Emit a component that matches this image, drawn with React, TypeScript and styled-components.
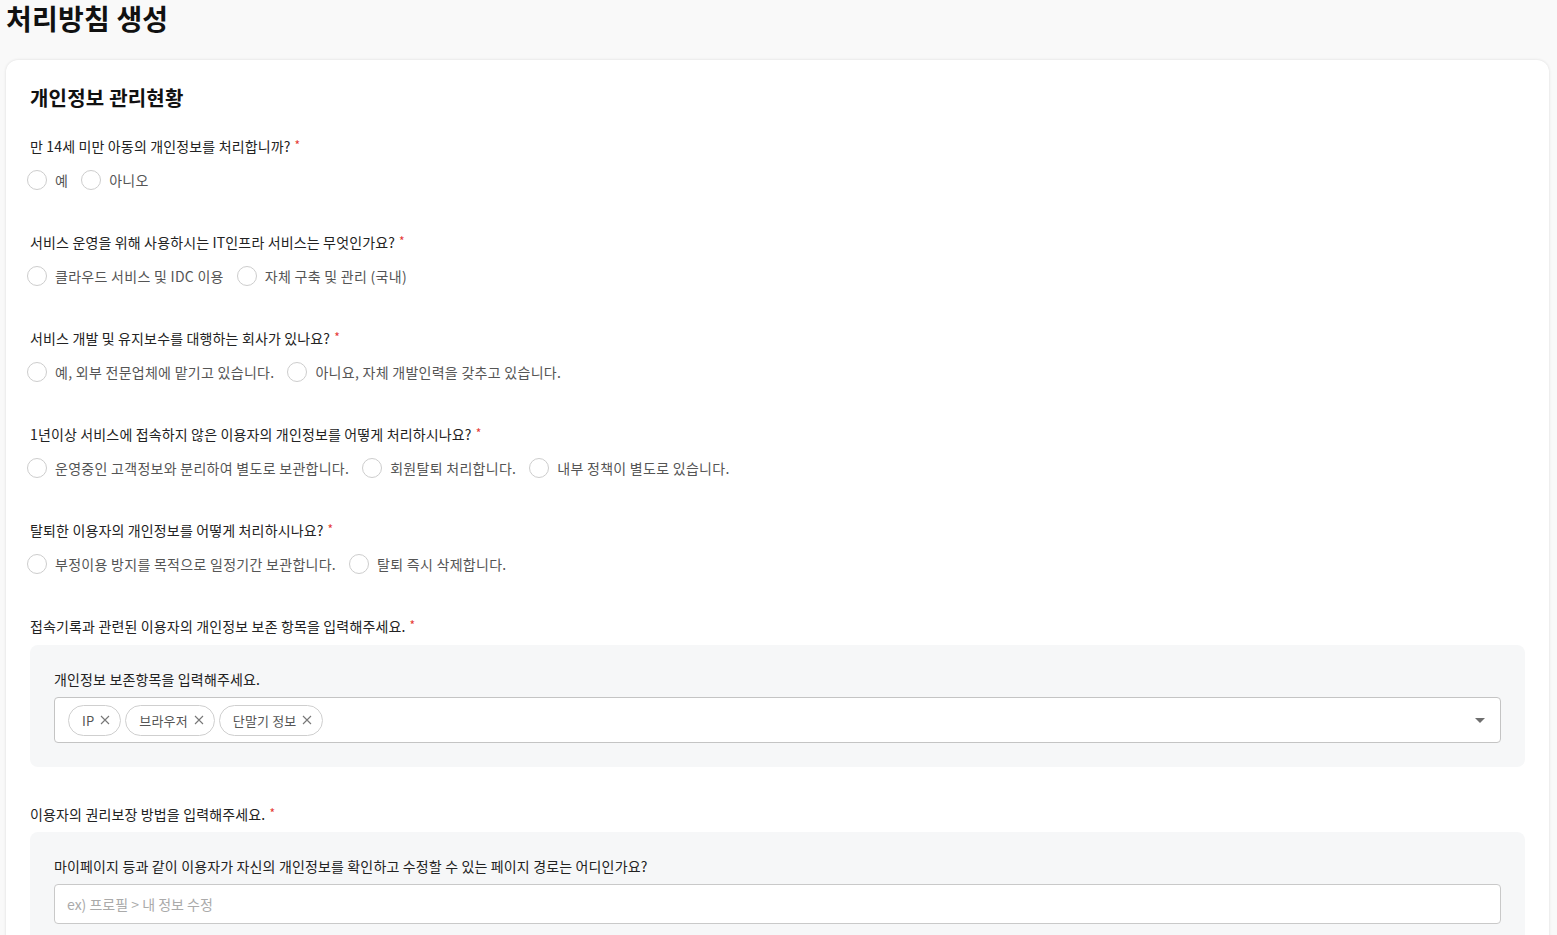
import React from "react";
import styled, { createGlobalStyle } from "styled-components";

const Global = createGlobalStyle`
  html, body { margin: 0; padding: 0; background: #f9f9f9; }
  body { font-family: "Noto Sans CJK KR", "Noto Sans", sans-serif; color: #222; }
  * { box-sizing: border-box; }
`;

const Page = styled.div`
  padding: 0 8px 0 6px;
`;

const PageTitle = styled.h1`
  margin: 0;
  font-size: 28px;
  line-height: 36px;
  font-weight: 700;
  color: #111;
  letter-spacing: 0.2px;
`;

const Card = styled.section`
  margin-top: 24px;
  background: #fff;
  border-radius: 12px;
  box-shadow: 0 0 3px rgba(0, 0, 0, 0.12);
  padding: 24px 24px 40px;
`;

const SectionTitle = styled.h2`
  margin: 0;
  font-size: 20px;
  line-height: 28px;
  font-weight: 700;
  color: #111;
  letter-spacing: 0.2px;
`;

const Question = styled.div<{ $top: number }>`
  margin-top: ${(p) => p.$top}px;
  display: flex;
  flex-direction: column;
`;

const Label = styled.div`
  font-size: 14px;
  line-height: 20px;
  height: 20px;
  color: #222;
  letter-spacing: 0.15px;
  white-space: nowrap;
`;

const Star = styled.span`
  color: #e53935;
  font-size: 12px;
  line-height: 12px;
  margin-left: 4px;
  position: relative;
  top: -2px;
`;

const RadioRow = styled.div`
  margin-top: 12px;
  display: flex;
  align-items: center;
  gap: 13px;
  margin-left: -3px;
  height: 24px;
`;

const RadioItem = styled.label`
  display: flex;
  align-items: center;
  gap: 8px;
  height: 24px;
  font-size: 14px;
  color: #555;
  letter-spacing: 0.28px;
  cursor: pointer;
`;

const Circle = styled.span`
  width: 20px;
  height: 20px;
  border-radius: 50%;
  border: 1px solid #cdcdcd;
  background: #fff;
  flex: none;
`;

const Panel = styled.div<{ $gap: number }>`
  margin-top: ${(p) => p.$gap}px;
  background: #f6f7f8;
  border-radius: 8px;
  padding: 24px;
  display: flex;
  flex-direction: column;
  gap: 8px;
`;

const SelectBox = styled.div`
  height: 46px;
  background: #fff;
  border: 1px solid #c4c4c4;
  border-radius: 4px;
  display: flex;
  align-items: center;
  padding: 0 14px 0 13px;
`;

const Chips = styled.div`
  flex: 1;
  display: flex;
  gap: 4px;
`;

const Chip = styled.span`
  height: 31px;
  border: 1px solid #cfcfcf;
  border-radius: 16px;
  padding: 0 10px 0 13px;
  display: inline-flex;
  align-items: center;
  gap: 6px;
  font-size: 13px;
  color: #555;
  letter-spacing: 0.15px;
  background: #fff;
`;

const ChipX = styled.svg`
  width: 10px;
  height: 10px;
  stroke: #777;
  stroke-width: 1.1;
`;

const Caret = styled.span`
  width: 0;
  height: 0;
  border-left: 5px solid transparent;
  border-right: 5px solid transparent;
  border-top: 5px solid #6e6e6e;
  margin-right: 1px;
`;

const TextInput = styled.input`
  height: 40px;
  width: 100%;
  border: 1px solid #c9c9c9;
  border-radius: 4px;
  padding: 0 12px;
  font-family: inherit;
  font-size: 14px;
  color: #222;
  background: #fff;
  outline: none;
  &::placeholder { color: #aaa; }
`;

const radioQuestions: { q: string; options: string[] }[] = [
  { q: "만 14세 미만 아동의 개인정보를 처리합니까?", options: ["예", "아니오"] },
  {
    q: "서비스 운영을 위해 사용하시는 IT인프라 서비스는 무엇인가요?",
    options: ["클라우드 서비스 및 IDC 이용", "자체 구축 및 관리 (국내)"],
  },
  {
    q: "서비스 개발 및 유지보수를 대행하는 회사가 있나요?",
    options: ["예, 외부 전문업체에 맡기고 있습니다.", "아니요, 자체 개발인력을 갖추고 있습니다."],
  },
  {
    q: "1년이상 서비스에 접속하지 않은 이용자의 개인정보를 어떻게 처리하시나요?",
    options: ["운영중인 고객정보와 분리하여 별도로 보관합니다.", "회원탈퇴 처리합니다.", "내부 정책이 별도로 있습니다."],
  },
  {
    q: "탈퇴한 이용자의 개인정보를 어떻게 처리하시나요?",
    options: ["부정이용 방지를 목적으로 일정기간 보관합니다.", "탈퇴 즉시 삭제합니다."],
  },
];

const chips = ["IP", "브라우저", "단말기 정보"];

export default function App() {
  return (
    <Page>
      <Global />
      <PageTitle>처리방침 생성</PageTitle>
      <Card>
        <SectionTitle>개인정보 관리현황</SectionTitle>
        {radioQuestions.map((item, i) => (
          <Question key={i} $top={i === 0 ? 24 : 40}>
            <Label>
              {item.q}
              <Star>*</Star>
            </Label>
            <RadioRow>
              {item.options.map((o) => (
                <RadioItem key={o}>
                  <Circle />
                  {o}
                </RadioItem>
              ))}
            </RadioRow>
          </Question>
        ))}
        <Question $top={40}>
          <Label>
            접속기록과 관련된 이용자의 개인정보 보존 항목을 입력해주세요.
            <Star>*</Star>
          </Label>
          <Panel $gap={9}>
            <Label>개인정보 보존항목을 입력해주세요.</Label>
            <SelectBox>
              <Chips>
                {chips.map((c) => (
                  <Chip key={c}>
                    {c}
                    <ChipX viewBox="0 0 10 10">
                      <path d="M1 1 L9 9 M9 1 L1 9" />
                    </ChipX>
                  </Chip>
                ))}
              </Chips>
              <Caret />
            </SelectBox>
          </Panel>
        </Question>
        <Question $top={37}>
          <Label>
            이용자의 권리보장 방법을 입력해주세요.
            <Star>*</Star>
          </Label>
          <Panel $gap={8}>
            <Label>마이페이지 등과 같이 이용자가 자신의 개인정보를 확인하고 수정할 수 있는 페이지 경로는 어디인가요?</Label>
            <TextInput placeholder="ex) 프로필 > 내 정보 수정" />
          </Panel>
        </Question>
      </Card>
    </Page>
  );
}
